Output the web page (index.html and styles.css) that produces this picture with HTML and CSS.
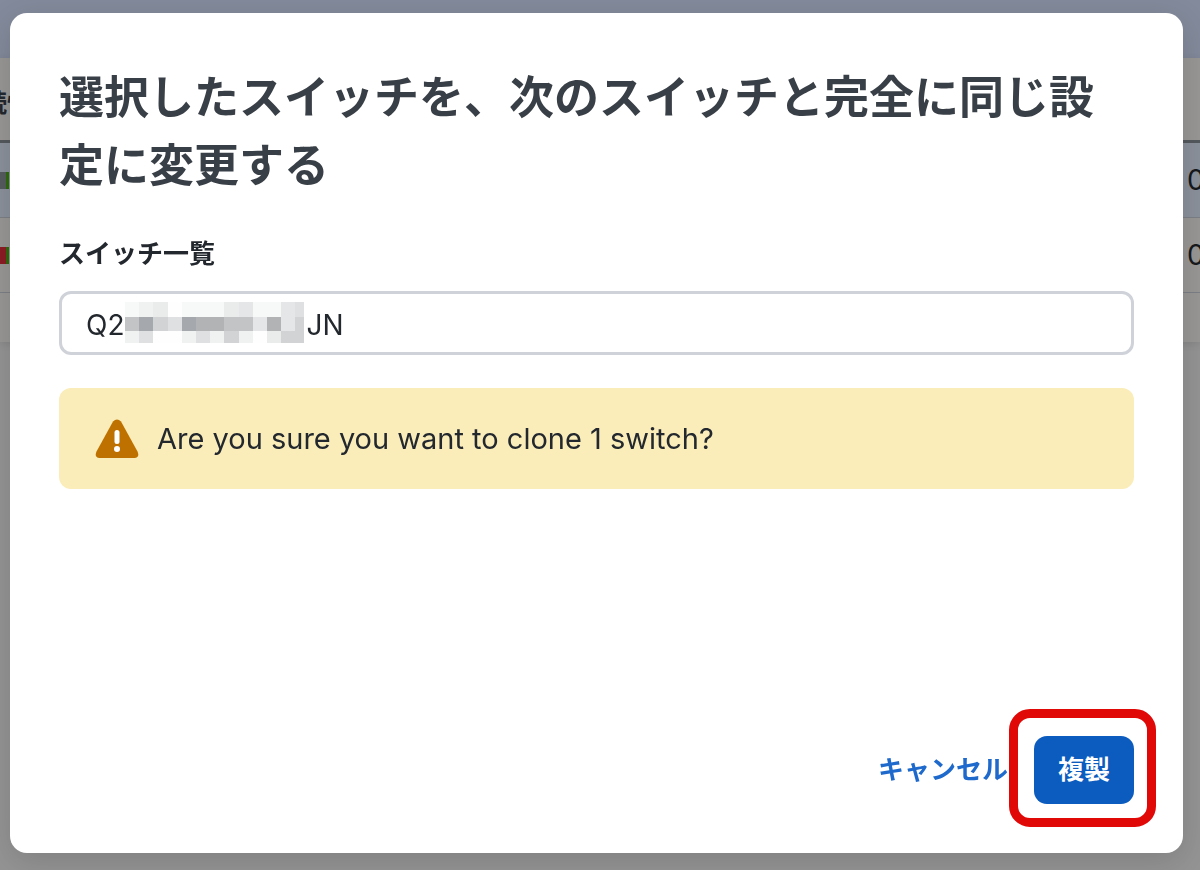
FILE: index.html
```html
<!DOCTYPE html>
<html lang="ja">

    <head>
        <meta charset="UTF-8">
        <title>スイッチ一覧</title>
        <link rel="stylesheet" href="styles.css">
    </head>

    <body>
        <div class="page">
            <div class="toolbar"></div>
            <div class="list">
                <table class="switches">
                    <tr><th>接続性</th><th class="count"></th></tr>
                    <tr class="selected"><td><div class="bar idle"></div></td><td class="count">0</td></tr>
                    <tr><td><div class="bar down"></div></td><td class="count">0</td></tr>
                </table>
            </div>
        </div>

        <div class="overlay">
            <form class="modal" role="dialog" aria-labelledby="title">
                <h1 id="title">選択したスイッチを、次のスイッチと完全に同じ設定に変更する</h1>
                <label for="switch">スイッチ一覧</label>
                <div class="field">
                    <input id="switch" type="text" value="Q2&emsp;&emsp;&emsp;&emsp;&emsp;&emsp;&ensp;JN">
                    <!-- masked part of the serial -->
                    <div class="mask">
                        <i class="c1"></i><i class="c2"></i><i class="c3"></i><i></i><i class="c1"></i><i class="c1"></i><i class="c1"></i><i class="c3"></i><i class="c4"></i><i class="c1"></i><i class="c1"></i><i class="c4"></i><i class="c5"></i>
                        <i class="c7"></i><i class="c9"></i><i class="c6"></i><i class="c5"></i><i class="c9"></i><i class="c8"></i><i class="c8"></i><i class="c7"></i><i class="c7"></i><i class="c4"></i><i class="c8"></i><i class="c4"></i><i class="c6"></i>
                        <i class="c2"></i><i class="c5"></i><i></i><i></i><i class="c2"></i><i class="c5"></i><i class="c2"></i><i class="c6"></i><i class="c2"></i><i></i><i class="c3"></i><i class="c6"></i><i class="c6"></i>
                    </div>
                </div>
                <div class="alert">
                    <svg width="44" height="40" viewBox="0 0 44 40">
                        <path d="M18 2.500Q22 -1.500 26 2.500L42.500 32.500Q45 38.500 39.500 39H4.500Q-1 38.500 1.500 32.500Z" fill="#bf7100"/>
                        <path d="M22 13.500V22.500" stroke="#fff" stroke-width="5" stroke-linecap="round"/>
                        <circle cx="22" cy="30" r="3" fill="#fff"/>
                    </svg>
                    <span>Are you sure you want to clone 1 switch?</span>
                </div>
                <div class="actions">
                    <button type="button" class="cancel">キャンセル</button>
                    <div class="marked">
                        <button type="submit" class="clone">複製</button>
                    </div>
                </div>
            </form>
        </div>
    </body>
</html>
```
FILE: styles.css
```css
*{box-sizing:border-box;}
body{margin:0; overflow:hidden; background:#949494; color:#23282e; font-family:Inter,"Noto Sans CJK JP",sans-serif;}

/* list behind the dialog */
.page{height:100vh; overflow:hidden;}
.toolbar{height:58px; background:#838a9b;}
.list{height:284px; background:#989796; overflow:hidden; box-shadow:0 2px 8px rgba(0,0,0,.1);}
.switches{width:calc(100% + 86px); margin-left:-43px; border-collapse:separate; border-spacing:0; table-layout:fixed;}
.switches th{height:85px; padding:4px 0 0; border-bottom:3px solid #54595e; font-size:25px; text-align:left;}
.switches td{height:75px; padding:0; border-bottom:1px solid #7c8086; font-size:28px; color:#17191c;}
.switches .count{width:56px;}
.selected{background:#8b919b;}
.bar{width:52px; height:17px; border-right:3px solid #2f6b0b;}
.idle{background:#565b5e;}
.down{background:#8c1c25;}

.overlay{position:fixed; inset:0; display:flex; padding:13px 17px 17px 10px;}
.modal{flex:1; display:flex; flex-direction:column; padding:51px 49px 49px; border-radius:17px; background:#fff; box-shadow:0 8px 32px rgba(0,0,0,.14);}
h1{margin:0 0 36px; font-size:45px; line-height:68px; font-weight:600; color:#393f46;}
label{margin-bottom:19px; font-size:26px; line-height:36px; font-weight:600;}
.field{position:relative; margin-bottom:33px;}
.field input{display:block; width:100%; height:64px; padding:3px 24px 0; border:3px solid #cfd3d9; border-radius:12px; background:#fff; color:#23282e; font:28px Inter,sans-serif;}

.mask{position:absolute; left:66px; top:11px; display:grid; width:179px; grid-template-columns:repeat(12,5fr) 3fr; grid-template-rows:15px 14px 12px; background:#fefefe;}
.c1{background:#f7f8f8;}
.c2{background:#f0f1f1;}
.c3{background:#eaecec;}
.c4{background:#e4e6e7;}
.c5{background:#dfe0e2;}
.c6{background:#d2d3d5;}
.c7{background:#c2c4c6;}
.c8{background:#b2b3b5;}
.c9{background:#a5a8ac;}

.alert{display:flex; align-items:center; gap:18px; padding:30px 36px; border-radius:12px; background:#faedb9; font-size:29px; line-height:41px;}

.actions{display:flex; justify-content:flex-end; align-items:center; gap:26px; margin-top:auto;}
.actions button{border:0; font-family:inherit; font-size:26px; font-weight:600; cursor:pointer;}
.cancel{padding:0 0 5px; background:none; color:#1d69cc;}
.marked{position:relative;}
.marked::after{content:""; position:absolute; inset:-27px -22px -23px -25px; border:9px solid #e10808; border-radius:21px; pointer-events:none;}
.clone{display:block; height:68px; padding:0 24px 5px; border-radius:13px; background:#0b5cbe; color:#fff;}
```
